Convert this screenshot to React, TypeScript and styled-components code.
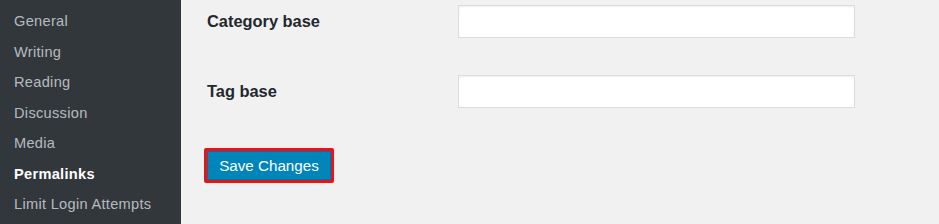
import React from 'react'
import styled,{createGlobalStyle} from 'styled-components'

const SIDEBAR_WIDTH=181
const LABEL_COLUMN_WIDTH=251
const INPUT_WIDTH=397
const INPUT_HEIGHT=33

const menuItems=['General','Writing','Reading','Discussion','Media','Permalinks','Limit Login Attempts']
const ACTIVE_ITEM='Permalinks'

const fields=['Category base','Tag base']

const GlobalStyle=createGlobalStyle`
html,body{
margin:0;
padding:0;
background:#f1f1f1;
}
body{
font-family:"Liberation Sans",Arial,sans-serif;
-webkit-font-smoothing:antialiased;
}
`

const Page=styled.div`
display:flex;
width:939px;
height:224px;
overflow:hidden;
`

const Sidebar=styled.nav`
width:${SIDEBAR_WIDTH}px;
flex-shrink:0;
background:#32373c;
display:flex;
flex-direction:column;
padding-top:6px;
box-sizing:border-box;
`

const MenuItem=styled.a<{active?:boolean}>`
display:block;
padding:0 0 0 14px;
height:30.5px;
line-height:30.5px;
font-size:14.6px;
letter-spacing:0.3px;
color:${({active})=>active?'#ffffff':'rgba(240,245,250,0.7)'};
font-weight:${({active})=>active?700:400};
text-decoration:none;
white-space:nowrap;
`

const Main=styled.main`
flex:1;
padding:5px 0 0 26px;
display:flex;
flex-direction:column;
`

const FieldRow=styled.div`
display:flex;
align-items:center;
height:${INPUT_HEIGHT}px;
margin-bottom:37px;
`

const Label=styled.label`
width:${LABEL_COLUMN_WIDTH}px;
flex-shrink:0;
font-size:16.4px;
font-weight:700;
color:#23282d;
`

const TextInput=styled.input`
width:${INPUT_WIDTH}px;
height:${INPUT_HEIGHT}px;
box-sizing:border-box;
border:1px solid #dddddd;
box-shadow:inset 0 1px 2px rgba(0,0,0,0.07);
background:#ffffff;
margin:0;
outline:none;
`

const Highlight=styled.div`
align-self:flex-start;
margin:3px 0 0 -3px;
border:3px solid #ee1111;
border-radius:2px;
display:flex;
`

const SaveButton=styled.button`
width:124px;
height:29px;
border:1px solid #0073aa;
background:#0085ba;
color:#ffffff;
font-family:inherit;
font-size:15.2px;
padding:0;
cursor:pointer;
`

export default function App(){
    return (
        <>
            <GlobalStyle />
            <Page>
                <Sidebar>
                    {menuItems.map(item=><MenuItem key={item} active={item===ACTIVE_ITEM}>{item}</MenuItem>)}
                </Sidebar>
                <Main>
                    {fields.map(field=>(
                        <FieldRow key={field}>
                            <Label>{field}</Label>
                            <TextInput type='text' />
                        </FieldRow>
                    ))}
                    <Highlight>
                        <SaveButton>Save Changes</SaveButton>
                    </Highlight>
                </Main>
            </Page>
        </>
    )
}
